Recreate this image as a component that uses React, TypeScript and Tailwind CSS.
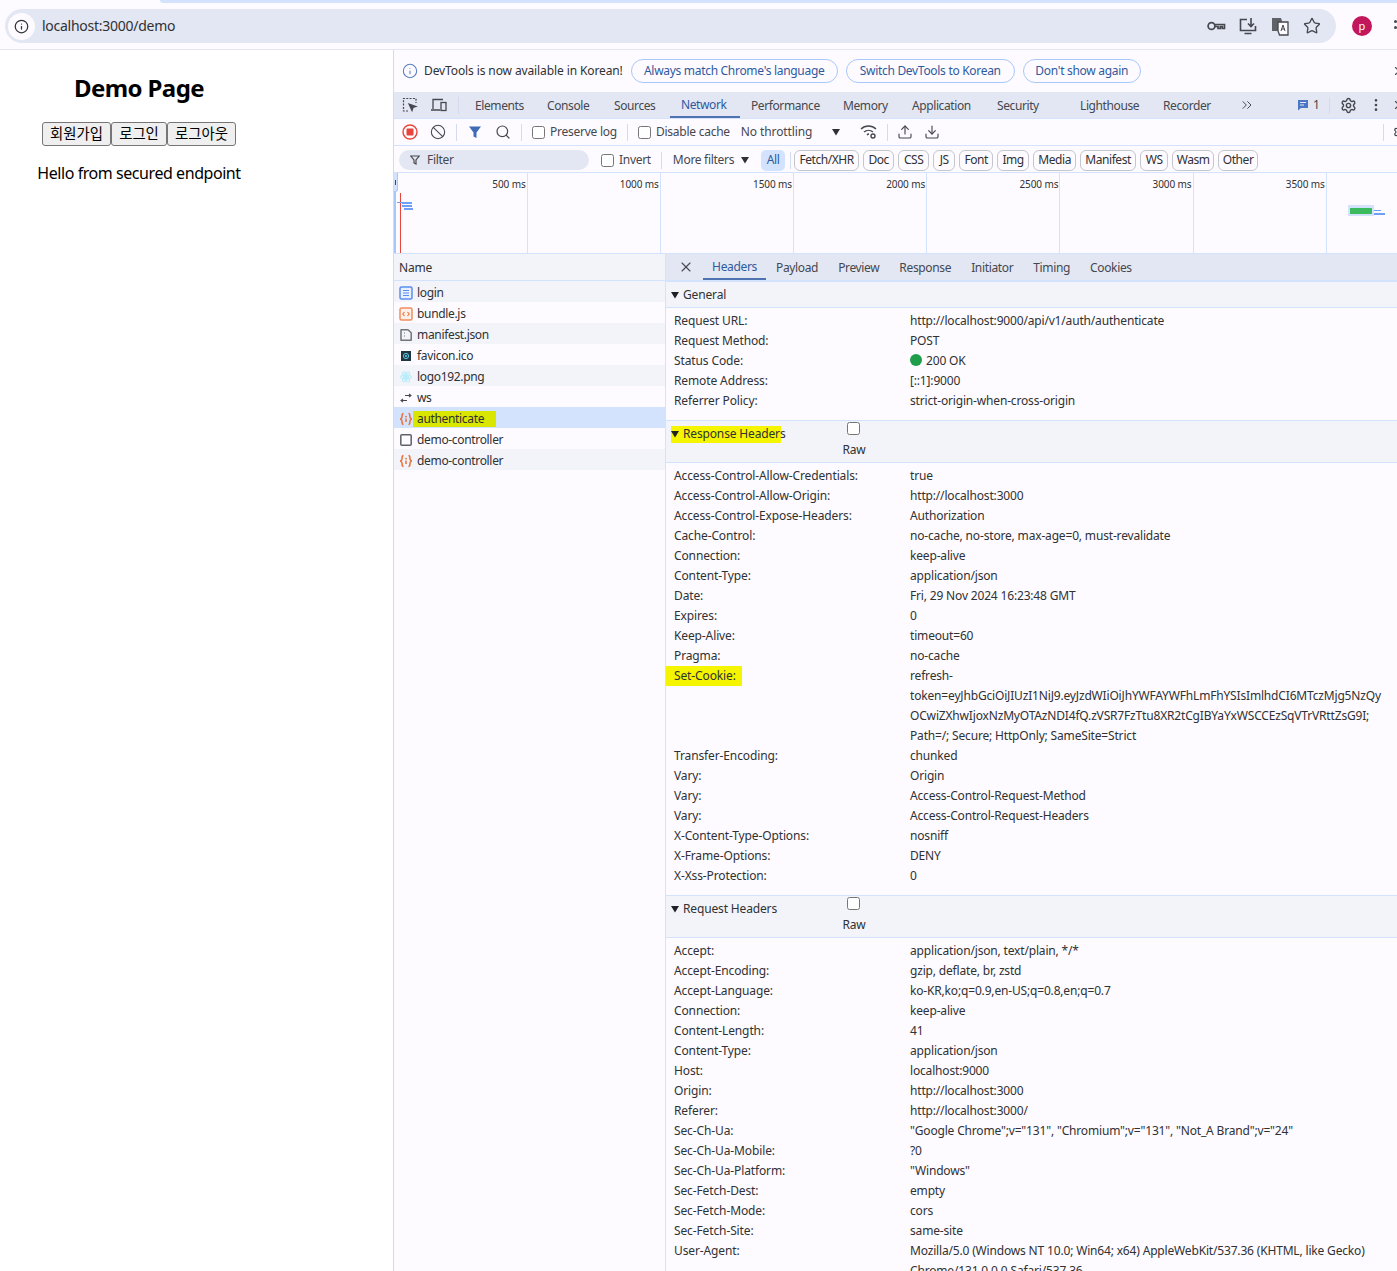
import { CircleAlert, Info, Ban, Search, Star, X, ChevronsRight, Settings, EllipsisVertical, Upload, Download } from "lucide-react";

const font = "font-['Noto_Sans','Noto_Sans_CJK_KR',sans-serif]";

const tabs = [
  { label: "Elements", w: "w-[72px]" },
  { label: "Console", w: "w-[67px]" },
  { label: "Sources", w: "w-[67px]" },
  { label: "Network", w: "w-[70px]", active: true },
  { label: "Performance", w: "w-[92px]" },
  { label: "Memory", w: "w-[69px]" },
  { label: "Application", w: "w-[85px]" },
  { label: "Security", w: "w-[83px]" },
  { label: "Lighthouse", w: "w-[83px]" },
  { label: "Recorder", w: "w-[87px]" },
];

const chips = [
  { label: "Fetch/XHR", w: "w-[65px]" },
  { label: "Doc", w: "w-[31px]" },
  { label: "CSS", w: "w-[31px]" },
  { label: "JS", w: "w-[22px]" },
  { label: "Font", w: "w-[34px]" },
  { label: "Img", w: "w-[32px]" },
  { label: "Media", w: "w-[43px]" },
  { label: "Manifest", w: "w-[56px]" },
  { label: "WS", w: "w-[28px]" },
  { label: "Wasm", w: "w-[42px]" },
  { label: "Other", w: "w-[40px]" },
];
const times = ["500 ms", "1000 ms", "1500 ms", "2000 ms", "2500 ms", "3000 ms", "3500 ms"];

const general = [
  ["Request URL:", "http://localhost:9000/api/v1/auth/authenticate"],
  ["Request Method:", "POST"],
  ["Status Code:", "200 OK"],
  ["Remote Address:", "[::1]:9000"],
  ["Referrer Policy:", "strict-origin-when-cross-origin"],
];

const responseHeaders = [
  ["Access-Control-Allow-Credentials:", "true"],
  ["Access-Control-Allow-Origin:", "http://localhost:3000"],
  ["Access-Control-Expose-Headers:", "Authorization"],
  ["Cache-Control:", "no-cache, no-store, max-age=0, must-revalidate"],
  ["Connection:", "keep-alive"],
  ["Content-Type:", "application/json"],
  ["Date:", "Fri, 29 Nov 2024 16:23:48 GMT"],
  ["Expires:", "0"],
  ["Keep-Alive:", "timeout=60"],
  ["Pragma:", "no-cache"],
  ["Set-Cookie:", "refresh-\ntoken=eyJhbGciOiJIUzI1NiJ9.eyJzdWIiOiJhYWFAYWFhLmFhYSIsImlhdCI6MTczMjg5NzQy\nOCwiZXhwIjoxNzMyOTAzNDI4fQ.zVSR7FzTtu8XR2tCgIBYaYxWSCCEzSqVTrVRttZsG9I;\nPath=/; Secure; HttpOnly; SameSite=Strict"],
  ["Transfer-Encoding:", "chunked"],
  ["Vary:", "Origin"],
  ["Vary:", "Access-Control-Request-Method"],
  ["Vary:", "Access-Control-Request-Headers"],
  ["X-Content-Type-Options:", "nosniff"],
  ["X-Frame-Options:", "DENY"],
  ["X-Xss-Protection:", "0"],
];

const requestHeaders = [
  ["Accept:", "application/json, text/plain, */*"],
  ["Accept-Encoding:", "gzip, deflate, br, zstd"],
  ["Accept-Language:", "ko-KR,ko;q=0.9,en-US;q=0.8,en;q=0.7"],
  ["Connection:", "keep-alive"],
  ["Content-Length:", "41"],
  ["Content-Type:", "application/json"],
  ["Host:", "localhost:9000"],
  ["Origin:", "http://localhost:3000"],
  ["Referer:", "http://localhost:3000/"],
  ["Sec-Ch-Ua:", "\"Google Chrome\";v=\"131\", \"Chromium\";v=\"131\", \"Not_A Brand\";v=\"24\""],
  ["Sec-Ch-Ua-Mobile:", "?0"],
  ["Sec-Ch-Ua-Platform:", "\"Windows\""],
  ["Sec-Fetch-Dest:", "empty"],
  ["Sec-Fetch-Mode:", "cors"],
  ["Sec-Fetch-Site:", "same-site"],
  ["User-Agent:", "Mozilla/5.0 (Windows NT 10.0; Win64; x64) AppleWebKit/537.36 (KHTML, like Gecko)\nChrome/131.0.0.0 Safari/537.36"],
];

function DocIcon() {
  return (
    <svg width="14" height="14" viewBox="0 0 14 14">
      <rect x="1" y="1" width="12" height="12" rx="1.5" fill="#e8f0fe" stroke="#5b8def" strokeWidth="1.5" />
      <path d="M4 4.5h6M4 7h6M4 9.5h6" stroke="#5b8def" strokeWidth="1.2" />
    </svg>
  );
}
function ScriptIcon() {
  return (
    <svg width="14" height="14" viewBox="0 0 14 14" fill="none">
      <rect x="1" y="1" width="12" height="12" rx="1.5" fill="#fdf0e8" stroke="#ee8f5f" strokeWidth="1.5" />
      <path d="M5.5 5 3.8 7l1.7 2M8.5 5l1.7 2-1.7 2" stroke="#e8713a" strokeWidth="1.1" />
    </svg>
  );
}
function FileIcon() {
  return (
    <svg width="14" height="14" viewBox="0 0 14 14" fill="none">
      <path d="M2 1.8h7l3.2 3v7.4H2z" stroke="#70757a" strokeWidth="1.5" strokeLinejoin="round" />
      <path d="M5 5h1M5 8h1" stroke="#70757a" strokeWidth="1.2" />
    </svg>
  );
}
function FaviconIcon() {
  return (
    <svg width="14" height="14" viewBox="0 0 14 14">
      <rect x="2" y="2" width="10" height="10" fill="#20353f" />
      <circle cx="7" cy="7" r="2.6" fill="none" stroke="#61dafb" strokeWidth="0.9" />
      <circle cx="7" cy="7" r="1" fill="#61dafb" />
    </svg>
  );
}
function LogoIcon() {
  return (
    <svg width="14" height="14" viewBox="0 0 14 14" fill="none" stroke="#b5ecfb" strokeWidth="1">
      <ellipse cx="7" cy="7" rx="5.5" ry="2.2" />
      <ellipse cx="7" cy="7" rx="5.5" ry="2.2" transform="rotate(60 7 7)" />
      <ellipse cx="7" cy="7" rx="5.5" ry="2.2" transform="rotate(120 7 7)" />
      <circle cx="7" cy="7" r="1.3" fill="#b5ecfb" />
    </svg>
  );
}
function FetchIcon() {
  return (
    <svg width="14" height="14" viewBox="0 0 14 14" fill="none">
      <path d="M4.5 1.5C2.8 1.5 3.2 3.5 3 5 2.9 6 2.4 6.7 1.2 7 2.4 7.3 2.9 8 3 9c.2 1.5-.2 3.5 1.5 3.5M9.5 1.5c1.7 0 1.3 2 1.5 3.5.1 1 .6 1.7 1.8 2-1.2.3-1.7 1-1.8 2-.2 1.5.2 3.5-1.5 3.5" stroke="#e8703a" strokeWidth="1.5" />
      <circle cx="7" cy="4.6" r="0.9" fill="#e8703a" />
      <path d="M7 6.5v3.5" stroke="#e8703a" strokeWidth="1.5" />
    </svg>
  );
}
function BlankIcon() {
  return (
    <svg width="14" height="14" viewBox="0 0 14 14" fill="none">
      <rect x="1.8" y="1.8" width="10.4" height="10.4" rx="1" stroke="#5f6368" strokeWidth="1.5" />
    </svg>
  );
}
function WsIcon() {
  return (
    <svg width="14" height="14" viewBox="0 0 14 14" fill="none" stroke="#45494d" strokeWidth="1.1">
      <path d="M6 4.5h6M10 2.8l2 1.7-2 1.7M8 9.5H2M4 7.8 2 9.5l2 1.7" />
    </svg>
  );
}

const requests = [
  { name: "login", icon: <DocIcon /> },
  { name: "bundle.js", icon: <ScriptIcon /> },
  { name: "manifest.json", icon: <FileIcon /> },
  { name: "favicon.ico", icon: <FaviconIcon /> },
  { name: "logo192.png", icon: <LogoIcon /> },
  { name: "ws", icon: <WsIcon /> },
  { name: "authenticate", icon: <FetchIcon />, selected: true },
  { name: "demo-controller", icon: <BlankIcon /> },
  { name: "demo-controller", icon: <FetchIcon /> },
];

function Divider() {
  return <div className="w-px h-[17px] bg-[#d3dcee]" />;
}

function HeaderRows({ rows }: { rows: string[][] }) {
  return (
    <div className="pt-[3px]">
      {rows.map(([k, v], i) => (
        <div key={i} className="flex pl-2 leading-5 text-[#303133]">
          <div className="w-[236px] shrink-0 tracking-[-0.12px]">
            {k === "Set-Cookie:" ? <span className="bg-[#f5f500] pr-[6px] -ml-2 pl-2 inline-block leading-5">{k}</span> : k}
          </div>
          <div className="whitespace-pre tracking-[-0.17px]">
            {k === "Status Code:" && <span className="inline-block w-3 h-3 rounded-full bg-[#1e9e4a] mr-1 align-[-1px]" />}
            {v}
          </div>
        </div>
      ))}
    </div>
  );
}

function SectionHead({ title, raw, mark }: { title: string; raw?: boolean; mark?: boolean }) {
  return (
    <div className={`flex bg-[#f2f4fa] border-y border-[#d3e3fd] ${raw ? "h-[43px]" : "h-[27px]"}`}>
      <div className="w-[170px] shrink-0 pl-[5px] h-[26px] flex items-center text-[#303133] tracking-[-0.15px]">
        <span className={`flex items-center whitespace-nowrap h-[17px] ${mark ? "bg-[#f5f500] w-[110px]" : ""}`}>
          <svg width="8" height="8" viewBox="0 0 8 8" className="mr-1 shrink-0">
            <path d="M0 1h8L4 7.5z" fill="#202124" />
          </svg>
          {title}
        </span>
      </div>
      {raw && (
        <div className="w-[34px] flex flex-col items-center text-[#303133]">
          <input type="checkbox" readOnly className="w-[13px] h-[13px] mt-[1px] accent-white" />
          <span className="mt-[7px] ml-[2px] leading-[16px] tracking-[-0.2px]">Raw</span>
        </div>
      )}
    </div>
  );
}

export default function App() {
  return (
    <div className={`${font} w-[1397px] h-[1271px] overflow-hidden bg-white text-xs relative`}>
      {/* browser chrome */}
      <div className="h-[50px] bg-[#fdfbff] border-b border-[#e3e6f0] overflow-hidden">
        <div className="h-[3px] ml-[160px] rounded-bl-md bg-[#d3e3fd]" />
        <div className="flex items-center mt-[6px] h-[34px] ml-[5px] w-[1331px] rounded-full bg-[#e3e7f3] pl-[3px] pr-[14px]">
          <div className="w-[27px] h-[27px] rounded-full bg-[#fdfbff] flex items-center justify-center">
            <CircleAlert className="w-[15px] h-[15px] rotate-180 text-[#303133]" strokeWidth={2} />
          </div>
          <span className="ml-[7px] text-[14px] text-[#303133] tracking-[-0.26px]">localhost:3000/demo</span>
          <div className="ml-auto flex items-center gap-[12px] text-[#45484e]">
            <svg width="20" height="20" viewBox="0 0 20 20" fill="none" stroke="currentColor" strokeWidth="1.7">
              <circle cx="5.5" cy="10" r="3.4" />
              <path d="M9 8.5h9.5v4h-2.2v-2h-2v2H12v-2H9" />
            </svg>
            <svg width="20" height="20" viewBox="0 0 20 20" fill="none" stroke="currentColor" strokeWidth="1.6">
              <path d="M9 3.5H2.5v11h15V10M6.5 17.5h7" />
              <path d="M13 2v8M10 7.5l3 3 3-3" />
            </svg>
            <svg width="20" height="20" viewBox="0 0 20 20" fill="none">
              <path d="M2 2h9l1 3v10H2z" fill="#5f6368" />
              <path d="M8 6h10v13H9.5L8 15z" fill="#fdfbff" stroke="#45484e" strokeWidth="1.3" />
              <path d="M11 15l2-6 2 6M11.8 13h2.6" stroke="#45484e" strokeWidth="1" />
            </svg>
            <div className="w-5 flex justify-center">
              <Star className="w-[18px] h-[18px]" strokeWidth={1.8} />
            </div>
          </div>
        </div>
        <div className="absolute left-[1352px] top-[16px] w-5 h-5 rounded-full bg-[#c2185b] text-white text-[11px] leading-5 text-center">p</div>
        <div className="absolute left-[1394px] top-[20px] w-[3px] h-[3px] rounded-full bg-[#45484e]" />
        <div className="absolute left-[1394px] top-[26px] w-[3px] h-[3px] rounded-full bg-[#45484e]" />
      </div>

      <div className="flex h-[1221px]">
        {/* demo page */}
        <div className="w-[393px] shrink-0 bg-white">
          <div className="w-[278px] flex flex-col items-center text-black">
            <h2 className="text-[24px] font-bold mt-[20px] leading-[36px] tracking-[-0.6px]">Demo Page</h2>
            <div className="flex mt-[16px]">
              {[
                { t: "회원가입", w: "w-[69px]" },
                { t: "로그인", w: "w-[56px]" },
                { t: "로그아웃", w: "w-[69px]" },
              ].map((b) => (
                <button key={b.t} className={`${b.w} h-6 pt-[1px] bg-[#efefef] border border-[#767676] rounded-[3px] text-[14.4px] leading-none text-black`}>
                  {b.t}
                </button>
              ))}
            </div>
            <p className="text-[16px] mt-[15px] leading-[24px] tracking-[-0.44px]">Hello from secured endpoint</p>
          </div>
        </div>

        {/* devtools */}
        <div className="flex-1 min-w-0 border-l border-[#d3dcee] bg-[#fdfbff] text-[#303133] overflow-hidden flex flex-col">
          <div className="h-[42px] flex items-center pl-2 shrink-0">
            <Info className="w-[16px] h-[16px] text-[#5a7fbf]" strokeWidth={1.6} />
            <span className="ml-[6px] whitespace-nowrap tracking-[-0.11px]">DevTools is now available in Korean!</span>
            <div className="flex ml-[8px] gap-2 text-[#2f5a9e] tracking-[-0.3px]">
              <span className="h-6 w-[207px] rounded-full border border-[#a8c7fa] flex items-center justify-center whitespace-nowrap">Always match Chrome's language</span>
              <span className="h-6 w-[169px] rounded-full border border-[#a8c7fa] flex items-center justify-center whitespace-nowrap">Switch DevTools to Korean</span>
              <span className="h-6 w-[118px] rounded-full border border-[#a8c7fa] flex items-center justify-center whitespace-nowrap">Don't show again</span>
            </div>
          </div>

          <div className="h-[27px] shrink-0 bg-[#e3e7f3] border-b border-[#d3e3fd] flex items-center pl-[8px] text-[#45484e]">
            <svg width="16" height="16" viewBox="0 0 16 16" fill="none" stroke="#45484e" strokeWidth="1.2">
              <path d="M6 14H1.5V1.5H14V6" strokeDasharray="2 1.3" />
              <path d="M7 7l7 2.5-3 1-1 3z" fill="#45484e" />
            </svg>
            <svg width="18" height="16" viewBox="0 0 18 16" fill="none" stroke="#45484e" strokeWidth="1.3" className="ml-[12px]">
              <path d="M3 12V2.5h10M1 13h9" />
              <rect x="11" y="5.5" width="5" height="8" />
            </svg>
            <div className="ml-[10px] mr-[5px] w-px h-[17px] bg-[#d3dcee]" />
            {tabs.map((t) => (
              <div key={t.label} className={`${t.w} h-[26px] pl-[11px] pt-[1px] flex items-center whitespace-nowrap tracking-[-0.4px] ${t.active ? "border-b-2 border-[#4f72b0] text-[#2f5a9e]" : ""}`}>
                {t.label}
              </div>
            ))}
            <ChevronsRight className="w-4 h-4" strokeWidth={1.5} />
            <svg width="12" height="12" viewBox="0 0 12 12" className="ml-[42px]">
              <path d="M1 1h10v8H4L1 11.5z" fill="#4a78c4" />
              <path d="M3 3.5h6M3 6h4" stroke="#e3e7f3" strokeWidth="1" />
            </svg>
            <span className="ml-1">1</span>
            <div className="ml-[9px] w-px h-[17px] bg-[#d3dcee]" />
            <Settings className="w-[17px] h-[17px] ml-[10px]" strokeWidth={2} />
            <EllipsisVertical className="w-4 h-4 ml-[11px]" />
          </div>

          <div className="h-[27px] shrink-0 border-b border-[#d3e3fd] flex items-center pl-[8px] text-[#45484e]">
            <svg width="16" height="16" viewBox="0 0 16 16">
              <circle cx="8" cy="8" r="7" fill="none" stroke="#e8453c" strokeWidth="1.4" />
              <rect x="4.5" y="4.5" width="7" height="7" rx="1" fill="#e8453c" />
            </svg>
            <Ban className="w-4 h-4 ml-[12px]" strokeWidth={1.6} />
            <div className="ml-[10px] mr-[11px]"><Divider /></div>
            <svg width="14" height="14" viewBox="0 0 14 14"><path d="M1 1.5h12L8.5 7.5V13l-3-1.5v-4z" fill="#3f6db5" /></svg>
            <Search className="w-4 h-4 ml-[13px]" strokeWidth={1.8} />
            <div className="ml-[10px] mr-[10px]"><Divider /></div>
            <input type="checkbox" readOnly className="w-[13px] h-[13px] m-0 accent-white" />
            <span className="ml-[5px] whitespace-nowrap tracking-[-0.25px]">Preserve log</span>
            <div className="ml-[10px] mr-[10px]"><Divider /></div>
            <input type="checkbox" readOnly className="w-[13px] h-[13px] m-0 accent-white" />
            <span className="ml-[5px] whitespace-nowrap tracking-[-0.25px]">Disable cache</span>
            <span className="ml-[11px] whitespace-nowrap tracking-[-0.1px]">No throttling</span>
            <svg width="8" height="8" viewBox="0 0 8 8" className="ml-[20px]"><path d="M0 1h8L4 7.5z" fill="#303133" /></svg>
            <svg width="18" height="16" viewBox="0 0 18 16" fill="none" stroke="#45484e" strokeWidth="1.4" className="ml-[20px]">
              <path d="M1 5a11 11 0 0 1 15 0M4 8a7 7 0 0 1 9 0M7 11a3 3 0 0 1 2-1" />
              <circle cx="13" cy="12" r="2" />
            </svg>
            <div className="ml-[9px] mr-[9px]"><Divider /></div>
            <Upload className="w-4 h-4" strokeWidth={1.7} />
            <Download className="w-4 h-4 ml-[11px]" strokeWidth={1.7} />
          </div>

          <div className="h-[27px] shrink-0 border-b border-[#d3e3fd] flex items-center pl-[5px] pt-[2px] text-[#45484e] tracking-[-0.3px]">
            <div className="w-[190px] h-5 rounded-full bg-[#e3e7f3] flex items-center pl-[11px]">
              <svg width="10" height="10" viewBox="0 0 10 10" fill="none" stroke="#45484e" strokeWidth="1.2"><path d="M.8 1h8.4L6 5v4L4 8V5z" /></svg>
              <span className="ml-[7px]">Filter</span>
            </div>
            <input type="checkbox" readOnly className="ml-3 w-[13px] h-[13px] m-0 accent-white" />
            <span className="ml-[5px]">Invert</span>
            <div className="ml-[10px] mr-[11px]"><Divider /></div>
            <span className="whitespace-nowrap">More filters</span>
            <svg width="8" height="8" viewBox="0 0 8 8" className="ml-[7px]"><path d="M0 1h8L4 7.5z" fill="#303133" /></svg>
            <span className="ml-[12px] h-[21px] w-6 justify-center rounded-[5px] bg-[#d3e3fd] text-[#2f5a9e] flex items-center">All</span>
            <div className="ml-[5px] mr-[3px]"><Divider /></div>
            <div className="flex gap-[4px] tracking-[-0.45px]">
              {chips.map((c) => (
                <span key={c.label} className={`${c.w} h-[21px] rounded-[6px] border border-[#c4c7cc] flex items-center justify-center whitespace-nowrap text-[#303133]`}>{c.label}</span>
              ))}
            </div>
          </div>

          {/* timeline */}
          <div className="h-[81px] shrink-0 border-b border-[#d3e3fd] flex relative">
            <div className="w-[0.4px] shrink-0" />
            {times.map((t) => (
              <div key={t} className="w-[133.2px] shrink-0 border-r border-[#d3e3fd] text-[10px] leading-[14px] pt-[4px] pr-[1px] text-right text-[#303133] tracking-[-0.1px]">{t}</div>
            ))}
            <div className="absolute left-0 top-0 w-[2px] h-full bg-[#a8c7fa]" />
            <div className="absolute left-0 top-0 w-[4px] h-[19px] rounded-br-[3px] bg-[#d3e3fd] border-r border-b border-[#a8c7fa] flex items-center justify-center">
              <div className="w-px h-[5px] bg-[#45484e]" />
            </div>
            <div className="absolute left-[6px] top-[20px] w-px h-[60px] bg-[#e8453c]" />
            <div className="absolute left-[3px] top-[29px] w-[5px] h-[1px] bg-[#6ea0f5]" />
            <div className="absolute left-[8px] top-[29px] w-[10px] h-[2px] bg-[#6ea0f5]" />
            <div className="absolute left-[8px] top-[32px] w-[10px] h-[2px] bg-[#6ea0f5]" />
            <div className="absolute left-[10px] top-[35px] w-[9px] h-[2px] bg-[#6ea0f5]" />
            <div className="absolute left-[954px] top-[32px] w-[26px] h-[11px] bg-[#d3e3fd] flex items-center justify-center">
              <div className="w-[22px] h-[6px] bg-[#3cba5f]" />
            </div>
            <div className="absolute left-[980px] top-[37px] w-[7px] h-[1px] bg-[#6ea0f5]" />
            <div className="absolute left-[980px] top-[40px] w-[11px] h-[2px] bg-[#6ea0f5]" />
          </div>

          <div className="flex flex-1 min-h-0">
            {/* request list */}
            <div className="w-[272px] shrink-0 border-r border-[#d3e3fd]">
              <div className="h-[27px] bg-[#f2f4fa] border-b border-[#d3e3fd] flex items-center pl-[5px] pt-[1px] tracking-[-0.2px]">Name</div>
              <div className="tracking-[-0.33px]">
                {requests.map((r, i) => (
                  <div key={i} className={`h-[21px] pt-[2px] flex items-center pl-[5px] ${r.selected ? "bg-[#d3e3fd]" : i % 2 === 0 ? "bg-[#f2f4fa]" : ""}`}>
                    {r.icon}
                    {r.selected ? <span className="ml-0 pl-[4px] w-[83px] bg-[#d9e600] leading-[16px]">{r.name}</span> : <span className="ml-[4px]">{r.name}</span>}
                  </div>
                ))}
              </div>
            </div>

            {/* details */}
            <div className="flex-1 min-w-0 overflow-hidden">
              <div className="h-[27px] bg-[#e3e7f3] border-b border-[#d3e3fd] flex items-center pl-[12px] text-[#45484e] tracking-[-0.35px]">
                <X className="w-4 h-4" strokeWidth={1.6} />
                <div className="ml-[9px] h-[26px] w-[63px] pt-[1px] justify-center flex items-center border-b-2 border-[#4f72b0] text-[#2f5a9e]">Headers</div>
                {["Payload", "Preview", "Response", "Initiator", "Timing", "Cookies"].map((t) => (
                  <div key={t} className="px-[10px] pt-[1px] flex items-center">{t}</div>
                ))}
              </div>
              <SectionHead title="General" />
              <div className="h-[112px]">
                <HeaderRows rows={general} />
              </div>
              <SectionHead title="Response Headers" raw mark />
              <div className="h-[432px]">
                <HeaderRows rows={responseHeaders} />
              </div>
              <SectionHead title="Request Headers" raw />
              <HeaderRows rows={requestHeaders} />
            </div>
          </div>
        </div>
      </div>

      {/* clipped controls at the window edge */}
      <X className="absolute left-[1392px] top-[64px] w-[14px] h-[14px] text-[#45484e]" />
      <X className="absolute left-[1392px] top-[98px] w-[14px] h-[14px] text-[#45484e]" />
      <div className="absolute left-[1383px] top-[124px] w-px h-[17px] bg-[#d3dcee]" />
      <Settings className="absolute left-[1393px] top-[125px] w-[14px] h-[14px] text-[#45484e]" />
    </div>
  );
}
